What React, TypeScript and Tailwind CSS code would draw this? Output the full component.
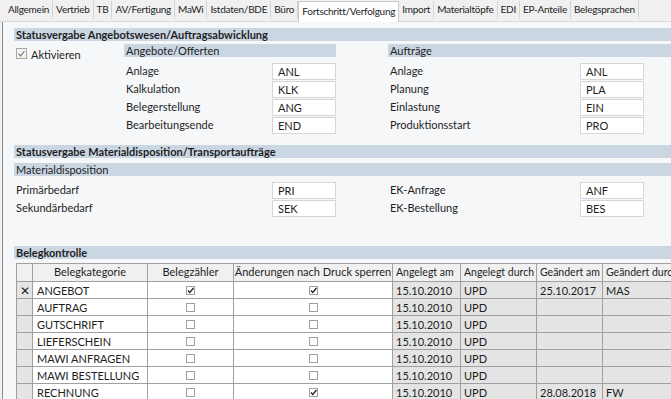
import React from "react";

const tabs = ["Allgemein","Vertrieb","TB","AV/Fertigung","MaWi","Istdaten/BDE","Büro","Fortschritt/Verfolgung","Import","Materialtöpfe","EDI","EP-Anteile","Belegsprachen"];

function Field({ label, value, lx }: { label: string; value: string; lx: string }) {
  return (
    <div className="flex items-center h-[18px]">
      <div className={lx}>{label}</div>
      <div className="h-[17px] w-[64px] bg-white border border-[#d6d6d6] pl-[5px] leading-[15px]">{value}</div>
    </div>
  );
}

function Check({ on }: { on: boolean }) {
  return (
    <div className="mx-auto w-[9px] h-[9px] border border-[#a0a0a0] bg-white relative">
      {on && (
        <svg viewBox="0 0 9 9" className="absolute -left-px -top-px w-[9px] h-[9px]">
          <path d="M2 4.5 L3.8 6.5 L7.5 2" stroke="#222" strokeWidth="1.3" fill="none" />
        </svg>
      )}
    </div>
  );
}

const rows = [
  { k: "ANGEBOT", z: true, a: true, am: "15.10.2010", ad: "UPD", gm: "25.10.2017", gd: "MAS" },
  { k: "AUFTRAG", z: false, a: false, am: "15.10.2010", ad: "UPD", gm: "", gd: "" },
  { k: "GUTSCHRIFT", z: false, a: false, am: "15.10.2010", ad: "UPD", gm: "", gd: "" },
  { k: "LIEFERSCHEIN", z: false, a: false, am: "15.10.2010", ad: "UPD", gm: "", gd: "" },
  { k: "MAWI ANFRAGEN", z: false, a: false, am: "15.10.2010", ad: "UPD", gm: "", gd: "" },
  { k: "MAWI BESTELLUNG", z: false, a: false, am: "15.10.2010", ad: "UPD", gm: "", gd: "" },
  { k: "RECHNUNG", z: false, a: true, am: "15.10.2010", ad: "UPD", gm: "28.08.2018", gd: "FW" },
  { k: "", z: false, a: false, am: "", ad: "", gm: "", gd: "" },
];

export default function App() {
  return (
    <div className="w-[671px] h-[399px] overflow-hidden bg-[#f0f0f0] text-[11px] text-[#1e1e1e]" style={{ fontFamily: 'Lato, sans-serif' }}>
      {/* tabs */}
      <div className="flex h-[22px] items-end pl-[5px] border-b border-[#d9d9d9] text-[10px] tracking-[-0.25px]">
        {tabs.map((t) => {
          const active = t === "Fortschritt/Verfolgung";
          return active ? (
            <div key={t} className="h-[21px] px-[3px] bg-white border border-b-0 border-[#c8c8c8] leading-[19px] -mb-px whitespace-nowrap">{t}</div>
          ) : (
            <div key={t} className="h-[18px] px-[3px] leading-[17px] border-r border-[#d4d4d4] mb-[2px] whitespace-nowrap">{t}</div>
          );
        })}
      </div>
      {/* content */}
      <div className="ml-[2px] border-l border-[#8a8a8a] bg-[#f6f7f9] h-[377px] pl-[11px] pt-[6px]">
        <div className="h-[13px] bg-[#cbd6e3] font-bold pl-[2px] leading-[13px]">Statusvergabe Angebotswesen/Auftragsabwicklung</div>
        <div className="flex mt-[3px]">
          <div className="w-[110px] flex items-start pt-[3px] pl-[2px]">
            <div className="w-[11px] h-[11px] border border-[#a8a8a8] bg-[#f4f4f4] relative mr-[4px] mt-[1px]">
              <svg viewBox="0 0 11 11" className="absolute -left-px -top-px w-[11px] h-[11px]">
                <path d="M2.5 5.5 L4.5 8 L8.5 3" stroke="#777" strokeWidth="1.2" fill="none" />
              </svg>
            </div>
            <span>Aktivieren</span>
          </div>
          <div className="w-[212px]">
            <div className="h-[13px] bg-[#cbd6e3] pl-[2px] leading-[13px]">Angebote/Offerten</div>
            <div className="mt-[5px] flex flex-col">
              <Field label="Anlage" value="ANL" lx="w-[148px] pl-[2px]" />
              <Field label="Kalkulation" value="KLK" lx="w-[148px] pl-[2px]" />
              <Field label="Belegerstellung" value="ANG" lx="w-[148px] pl-[2px]" />
              <Field label="Bearbeitungsende" value="END" lx="w-[148px] pl-[2px]" />
            </div>
          </div>
          <div className="ml-[52px] flex-1">
            <div className="h-[13px] bg-[#cbd6e3] pl-[2px] leading-[13px]">Aufträge</div>
            <div className="mt-[5px] flex flex-col">
              <Field label="Anlage" value="ANL" lx="w-[192px] pl-[2px]" />
              <Field label="Planung" value="PLA" lx="w-[192px] pl-[2px]" />
              <Field label="Einlastung" value="EIN" lx="w-[192px] pl-[2px]" />
              <Field label="Produktionsstart" value="PRO" lx="w-[192px] pl-[2px]" />
            </div>
          </div>
        </div>
        <div className="h-[13px] bg-[#cbd6e3] font-bold pl-[2px] leading-[13px] mt-[11px]">Statusvergabe Materialdisposition/Transportaufträge</div>
        <div className="h-[13px] bg-[#cbd6e3] pl-[2px] leading-[13px] mt-[5px]">Materialdisposition</div>
        <div className="flex mt-[5px]">
          <div className="w-[322px] flex flex-col">
            <Field label="Primärbedarf" value="PRI" lx="w-[258px] pl-[2px]" />
            <Field label="Sekundärbedarf" value="SEK" lx="w-[258px] pl-[2px]" />
          </div>
          <div className="ml-[52px] flex flex-col">
            <Field label="EK-Anfrage" value="ANF" lx="w-[192px] pl-[2px]" />
            <Field label="EK-Bestellung" value="BES" lx="w-[192px] pl-[2px]" />
          </div>
        </div>
        <div className="h-[13px] bg-[#cbd6e3] font-bold pl-[2px] leading-[13px] mt-[29px]">Belegkontrolle</div>
        <div className="mt-[4px] ml-[2px] overflow-hidden">
          <table className="table-fixed border-collapse w-[700px]">
            <colgroup>
              <col className="w-[16px]" />
              <col className="w-[115px]" />
              <col className="w-[86px]" />
              <col className="w-[159px]" />
              <col className="w-[68px]" />
              <col className="w-[76px]" />
              <col className="w-[66px]" />
              <col className="w-[114px]" />
            </colgroup>
            <thead>
              <tr className="h-[18px]">
                {["", "Belegkategorie", "Belegzähler", "Änderungen nach Druck sperren", "Angelegt am", "Angelegt durch", "Geändert am", "Geändert durch"].map((h, i) => (
                  <th key={i} className={"font-normal border border-[#a0a0a0] bg-[#f0f0f0] whitespace-nowrap overflow-hidden " + (i < 4 ? "text-center px-0" : "text-left pl-[3px] text-[10.5px]")}>{h}</th>
                ))}
              </tr>
            </thead>
            <tbody>
              {rows.map((r, i) => (
                <tr key={i} className="h-[17px]">
                  <td className="border border-[#a0a0a0] bg-[#e4e4e4] text-center leading-[15px] text-[12px]">{i === 0 ? "✕" : ""}</td>
                  <td className="border border-[#a0a0a0] bg-white pl-[4px] leading-[15px] whitespace-nowrap">{r.k}</td>
                  <td className="border border-[#a0a0a0] bg-white">{r.k && <Check on={r.z} />}</td>
                  <td className="border border-[#a0a0a0] bg-white">{r.k && <Check on={r.a} />}</td>
                  <td className="border border-[#a0a0a0] bg-[#e4e4e4] pl-[3px] leading-[15px]">{r.am}</td>
                  <td className="border border-[#a0a0a0] bg-[#e4e4e4] pl-[3px] leading-[15px]">{r.ad}</td>
                  <td className="border border-[#a0a0a0] bg-[#e4e4e4] pl-[3px] leading-[15px]">{r.gm}</td>
                  <td className="border border-[#a0a0a0] bg-[#e4e4e4] pl-[3px] leading-[15px]">{r.gd}</td>
                </tr>
              ))}
            </tbody>
          </table>
        </div>
      </div>
    </div>
  );
}
